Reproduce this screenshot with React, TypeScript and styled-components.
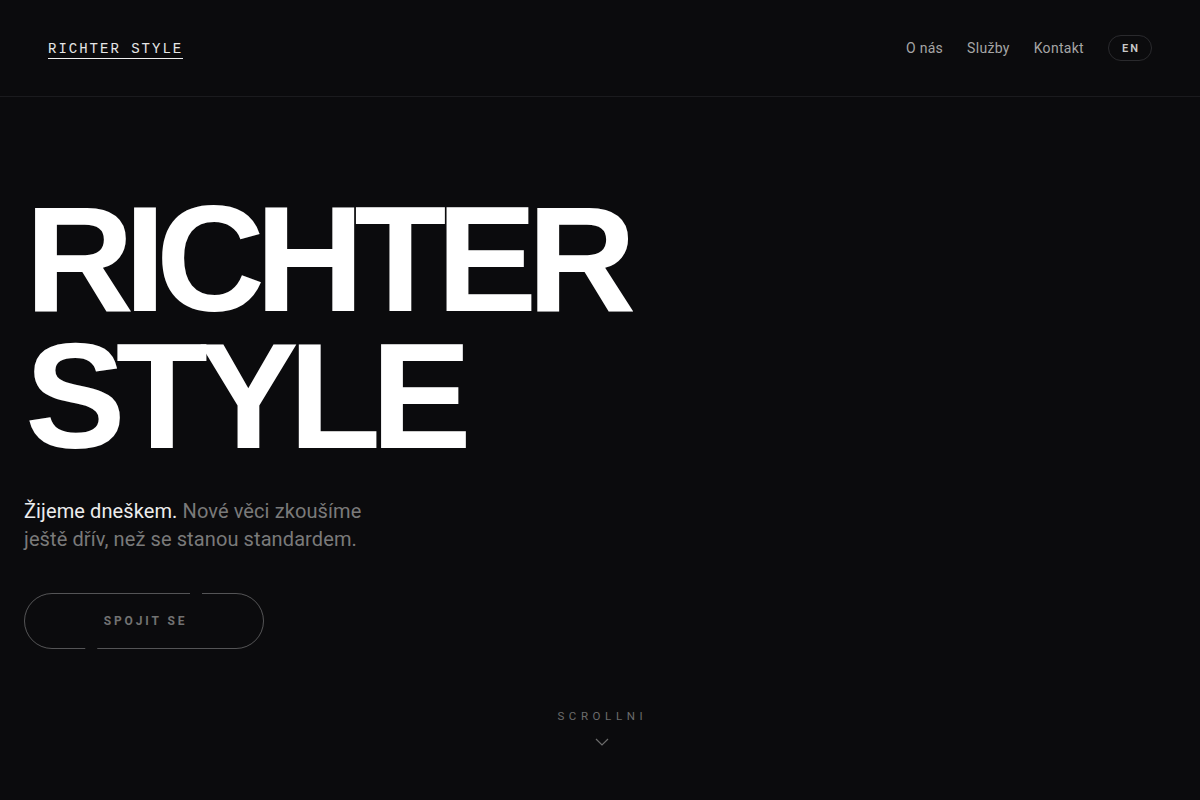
import React from 'react';
import styled, { createGlobalStyle } from 'styled-components';

const sans = `Roboto, "Noto Sans", Arial, sans-serif`;
const mono = `"Liberation Mono", "DejaVu Sans Mono", monospace`;
const display = `"Liberation Sans", Arial, Helvetica, sans-serif`;

const GlobalStyle = createGlobalStyle`
  * { box-sizing: border-box; }
  html, body { margin: 0; padding: 0; background: #0b0b0d; }
  body { font-family: ${sans}; color: #e8e8e8; }
`;

// 페이지 전체
const Page = styled.div`
  min-height: 800px;
  background: #0b0b0d;
  display: flex;
  flex-direction: column;
`;

// 상단 바
const Header = styled.header`
  height: 97px;
  padding: 0 48px;
  display: flex;
  align-items: center;
  justify-content: space-between;
  border-bottom: 1px solid #1b1b1e;
`;

const Logo = styled.a`
  font-family: ${mono};
  font-size: 14px;
  letter-spacing: 2px;
  line-height: 16px;
  color: #e6e6e6;
  text-decoration: none;
  padding-bottom: 1px;
  border-bottom: 1px solid #f0f0f0;
  margin-top: 4px;
`;

const Nav = styled.nav`
  display: flex;
  align-items: center;
  gap: 24px;
`;

const NavLink = styled.a`
  font-size: 14px;
  letter-spacing: 0.3px;
  color: #a6a6a6;
  text-decoration: none;
`;

const LangPill = styled.button`
  width: 44px;
  height: 26px;
  border-radius: 13px;
  border: 1px solid #2a2a2d;
  background: transparent;
  color: #c8c8c8;
  font-family: ${sans};
  font-size: 11px;
  font-weight: 600;
  letter-spacing: 0.18em;
  padding: 0 0 0 2px;
`;

// 히어로 영역
const Hero = styled.main`
  flex: 1;
  padding: 93px 24px 0;
  display: flex;
  flex-direction: column;
`;

const Title = styled.h1`
  margin: 0 0 0 1px;
  font-family: ${display};
  font-weight: 700;
  font-size: 151px;
  line-height: 137px;
  letter-spacing: -0.066em;
  color: #ffffff;
`;

const Lead = styled.p`
  margin: 33px 0 0;
  max-width: 370px;
  font-size: 20px;
  line-height: 28px;
  letter-spacing: 0.1px;
  color: #7a7a7a;
`;

const Strong = styled.span`
  color: #ededed;
`;

const CtaButton = styled.button`
  position: relative;
  margin-top: 40px;
  width: 240px;
  height: 56px;
  border: none;
  border-radius: 28px;
  background: transparent;
  color: #727272;
  font-family: ${sans};
  font-size: 12px;
  font-weight: 700;
  letter-spacing: 0.24em;
  padding: 0 0 0 3px;
  cursor: pointer;
`;

const Outline = styled.svg`
  position: absolute;
  inset: 0;
  pointer-events: none;
`;

const Scroll = styled.div`
  align-self: center;
  margin-top: 60px;
  display: flex;
  flex-direction: column;
  align-items: center;
  gap: 15px;
  font-size: 11.5px;
  letter-spacing: 0.4em;
  color: #6c6c6c;
  padding-left: 0.4em;
`;

export default function App() {
  return (
    <>
      <GlobalStyle />
      <Page>
        <Header>
          <Logo href="#">RICHTER STYLE</Logo>
          <Nav>
            <NavLink href="#">O nás</NavLink>
            <NavLink href="#">Služby</NavLink>
            <NavLink href="#">Kontakt</NavLink>
            <LangPill>EN</LangPill>
          </Nav>
        </Header>
        <Hero>
          <Title>
            RICHTER
            <br />
            STYLE
          </Title>
          <Lead>
            <Strong>Žijeme dneškem.</Strong> Nové věci zkoušíme ještě dřív, než se stanou standardem.
          </Lead>
          <CtaButton>
            <Outline width="240" height="56" viewBox="0 0 240 56">
              <rect
                x="0.5"
                y="0.5"
                width="239"
                height="55"
                rx="27.5"
                fill="none"
                stroke="rgba(255,255,255,0.3)"
                strokeWidth="1"
                strokeDasharray="259 12"
                strokeDashoffset="121"
              />
            </Outline>
            SPOJIT SE
          </CtaButton>
          <Scroll>
            SCROLLNI
            <svg width="14" height="8" viewBox="0 0 14 8">
              <path d="M1 1l6 6 6-6" fill="none" stroke="#6c6c6c" strokeWidth="1.2" />
            </svg>
          </Scroll>
        </Hero>
      </Page>
    </>
  );
}
